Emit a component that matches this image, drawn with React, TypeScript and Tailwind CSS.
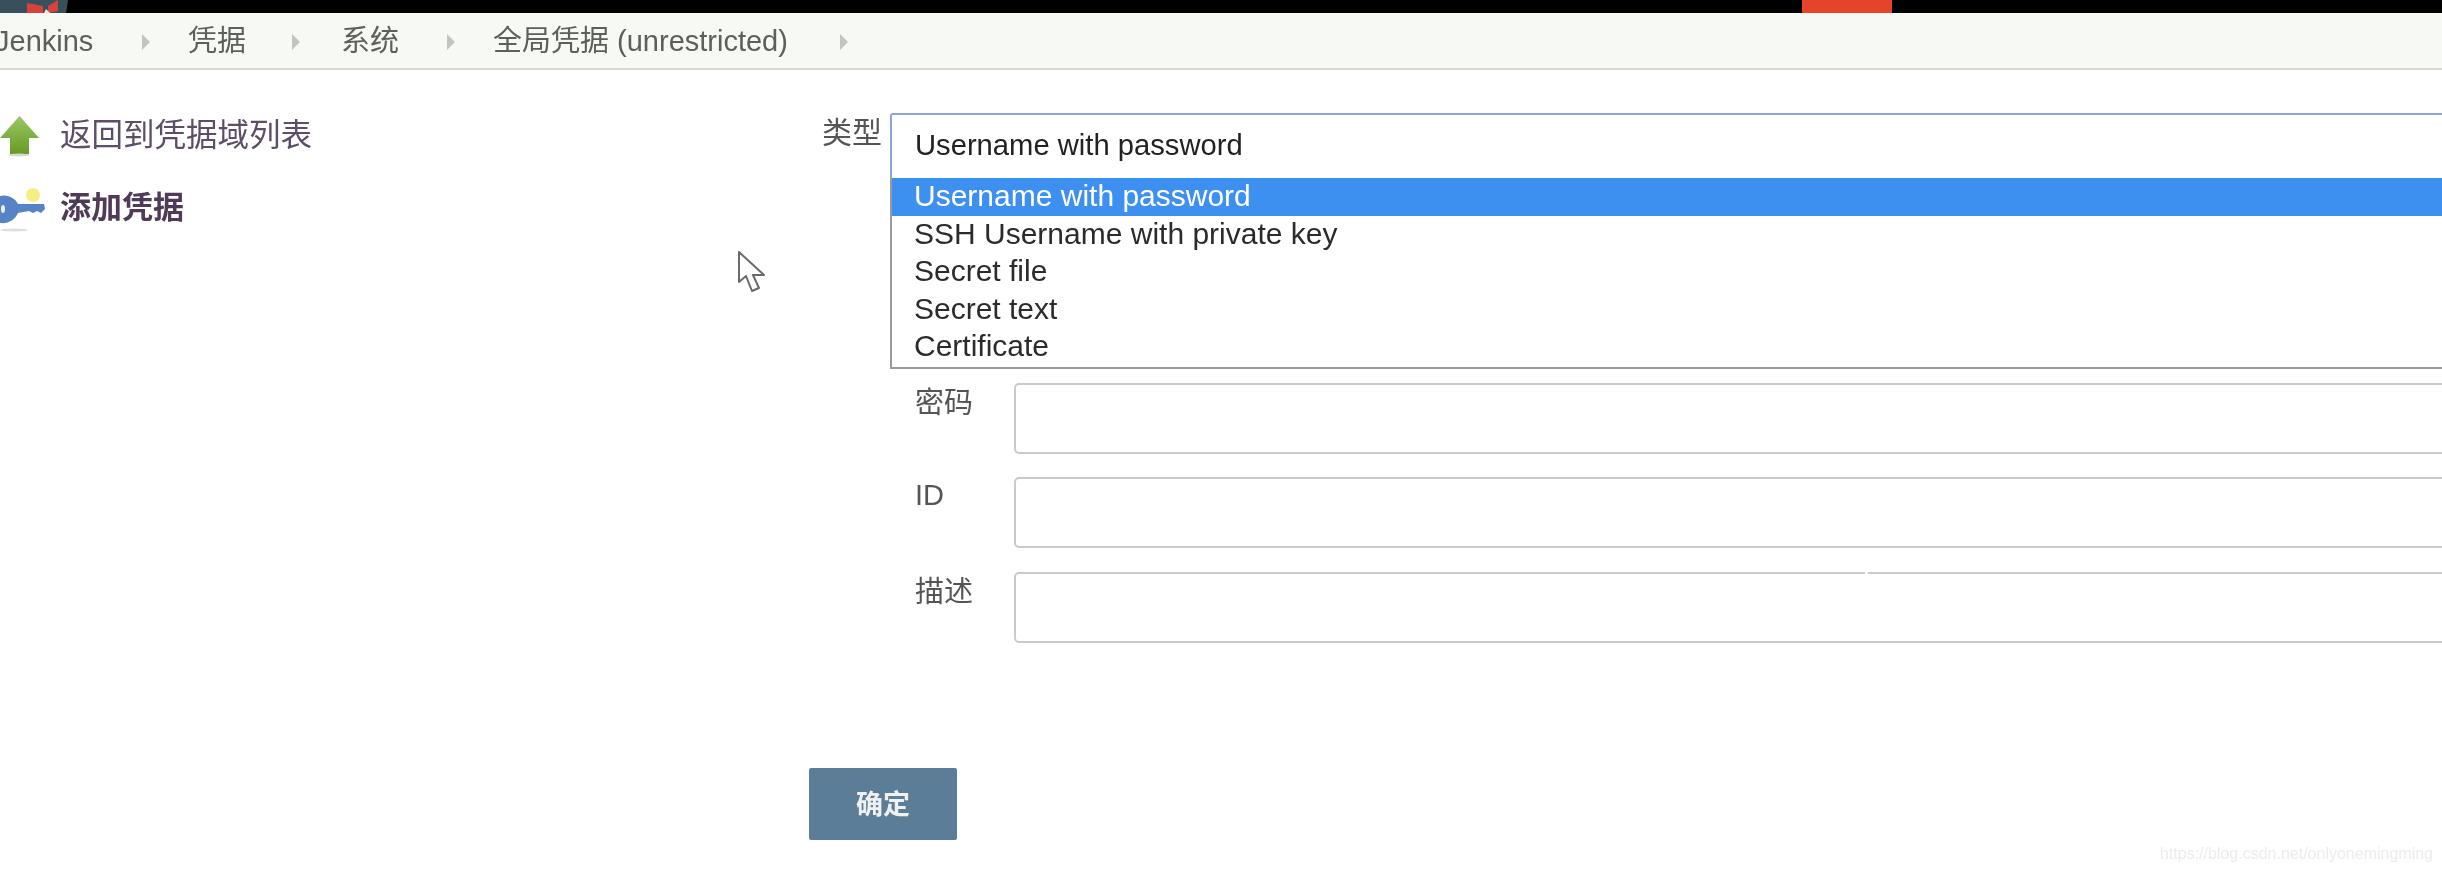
import React from 'react';

const font = 'font-["Liberation_Sans","Noto_Sans_CJK_SC",sans-serif]';

const crumbs = [
  { label: 'Jenkins', box: 'w-[193px] pr-[37px] -ml-[5px]' },
  { label: '凭据', box: 'w-[153px] pr-[40px]' },
  { label: '系统', box: 'w-[152px] pr-[37px]' },
  { label: '全局凭据 (unrestricted)', box: 'w-[356px]' },
];

const options = ['Username with password', 'SSH Username with private key', 'Secret file', 'Secret text', 'Certificate'];

const fields = [
  { label: '密码', mt: 'mt-0', pt: 'pt-[2px]' },
  { label: 'ID', mt: 'mt-[23px]', pt: 'pt-0' },
  { label: '描述', mt: 'mt-[24px]', pt: 'pt-[2px]' },
];

function CrumbArrow() {
  return (
    <svg width="10" height="20" viewBox="0 0 10 20" className="shrink-0">
      <path d="M1 2 L9 10 L1 18 Z" fill="#c3c6bf" />
    </svg>
  );
}

function UpArrow() {
  return (
    <svg width="40" height="42" viewBox="0 0 40 42" className="shrink-0">
      <defs>
        <linearGradient id="up" x1="0" y1="0" x2="0" y2="1">
          <stop offset="0" stopColor="#9cc765" />
          <stop offset="1" stopColor="#669a24" />
        </linearGradient>
      </defs>
      <path d="M19.5 1 L39 23 L29 23 L29 39 L10 39 L10 23 L0 23 Z" fill="url(#up)" />
      <ellipse cx="19" cy="40" rx="11" ry="1.5" fill="#d9d9d2" />
    </svg>
  );
}

function KeyIcon() {
  return (
    <svg width="46" height="46" viewBox="0 0 46 46" className="shrink-0">
      <circle cx="33" cy="8" r="7" fill="#f5ee83" />
      <path d="M0 9 C8 7 15 11 18 17 L44 17 L45 22 L41 26 L37 24 L33 26 L29 24 L18 26 C15 33 8 37 0 36 Z" fill="#5583c4" />
      <ellipse cx="3" cy="22" rx="2" ry="4" fill="#e8eef8" />
      <ellipse cx="14" cy="43" rx="14" ry="1.5" fill="#dedede" />
    </svg>
  );
}

function ButlerHead() {
  return (
    <svg width="68" height="13" viewBox="0 0 68 13" className="shrink-0">
      <path d="M0 0 H68 L66 13 H0 Z" fill="#38505c" />
      <path d="M27 3 L43 6 L43 13 L27 13 Z" fill="#d9423a" />
      <path d="M48 6 L58 0 L58 11 L48 13 Z" fill="#d9423a" />
      <path d="M44 13 L46 9 L50 13 Z" fill="#f0e3d3" />
    </svg>
  );
}

function Cursor() {
  return (
    <svg width="30" height="44" viewBox="0 0 30 44" className="absolute left-[737px] top-[250px]">
      <path d="M2 2 L2 32 L9 26 L15 41 L22 38 L16 25 L27 25 Z" fill="#fff" stroke="#6a6a6a" strokeWidth="2" strokeLinejoin="round" />
    </svg>
  );
}

export default function App() {
  return (
    <div className={`relative w-[2442px] h-[872px] overflow-hidden bg-white ${font} blur-[0.5px]`}>
      <div className="flex h-[13px] bg-black">
        <ButlerHead />
        <div className="ml-[1734px] w-[90px] bg-[#e5432a]" />
      </div>

      <div className="flex items-center h-[57px] pt-[2px] bg-[#f7f9f4] border-b-2 border-[#d9d9d6] text-[29px] text-[#5d6058]">
        {crumbs.map(c => (
          <div key={c.label} className={`flex items-center justify-between shrink-0 ${c.box}`}>
            <span className="whitespace-nowrap">{c.label}</span>
            <CrumbArrow />
          </div>
        ))}
      </div>

      <div className="flex">
        <aside className="w-[809px] shrink-0 pt-[45px]">
          <a className="flex items-center h-[42px] gap-[20px] text-[31.5px] text-[#5c4e66]">
            <UpArrow />
            <span>返回到凭据域列表</span>
          </a>
          <a className="flex items-center h-[46px] mt-[30px] gap-[14px] text-[31px] font-bold text-[#4f3b58]">
            <KeyIcon />
            <span className="-mt-[3px]">添加凭据</span>
          </a>
        </aside>

        <form className="flex-1 pt-[43px] pl-[13px] -mr-[40px]">
          <div className="flex">
            <label className="w-[68px] shrink-0 text-[30px] leading-[40px] text-[#555]">类型</label>
            <div className="flex-1">
              <div className="flex items-center h-[65px] pl-[23px] pb-[1px] border-2 border-b-0 border-[#8fa3d8] rounded-t-[3px] text-[29.2px] text-[#222]">
                Username with password
              </div>
              <div className="h-[191px] border-2 border-t-0 border-[#9a9a9a] text-[30px] leading-[36.5px] text-[#2b2b2b]">
                {options.map((o, i) => (
                  <div key={o} className={`pl-[22px] h-[37.6px] ${i === 0 ? 'bg-[#3d90f0] text-white' : ''}`}>{o}</div>
                ))}
              </div>
            </div>
          </div>

          <div className="ml-[93px] mt-[14px]">
            {fields.map(f => (
              <div key={f.label} className={`flex ${f.mt}`}>
                <label className={`w-[99px] shrink-0 text-[29px] leading-[36px] text-[#555] ${f.pt}`}>{f.label}</label>
                <div className="flex-1 h-[71px] border-2 border-[#cacaca] rounded-[5px]" />
              </div>
            ))}
          </div>

          <button type="button" className="block -ml-[13px] mt-[125px] w-[148px] h-[72px] pt-[2px] bg-[#5b7d97] rounded-[2px] text-[27px] font-bold text-[#f0f0f0]">
            确定
          </button>
        </form>
      </div>

      <Cursor />
      <div className="absolute left-[1865px] top-[570px] w-[3px] h-[5px] bg-white" />
      <div className="absolute right-[9px] bottom-[6px] text-[16px] text-[#ececec]">https://blog.csdn.net/onlyonemingming</div>
    </div>
  );
}
